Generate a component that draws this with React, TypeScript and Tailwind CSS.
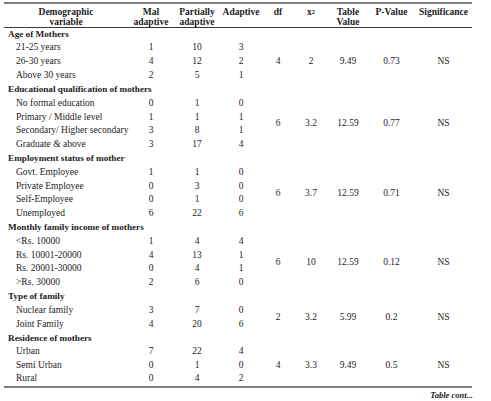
type Group = {
  title: string;
  rows: [string, string, string, string][];
  stats: [string, string, string, string, string];
};

const groups: Group[] = [
  {
    title: "Age of Mothers",
    rows: [
      ["21-25 years", "1", "10", "3"],
      ["26-30 years", "4", "12", "2"],
      ["Above 30 years", "2", "5", "1"],
    ],
    stats: ["4", "2", "9.49", "0.73", "NS"],
  },
  {
    title: "Educational qualification of mothers",
    rows: [
      ["No formal education", "0", "1", "0"],
      ["Primary / Middle level", "1", "1", "1"],
      ["Secondary/ Higher secondary", "3", "8", "1"],
      ["Graduate & above", "3", "17", "4"],
    ],
    stats: ["6", "3.2", "12.59", "0.77", "NS"],
  },
  {
    title: "Employment status of mother",
    rows: [
      ["Govt. Employee", "1", "1", "0"],
      ["Private Employee", "0", "3", "0"],
      ["Self-Employee", "0", "1", "0"],
      ["Unemployed", "6", "22", "6"],
    ],
    stats: ["6", "3.7", "12.59", "0.71", "NS"],
  },
  {
    title: "Monthly family income of mothers",
    rows: [
      ["<Rs. 10000", "1", "4", "4"],
      ["Rs. 10001-20000", "4", "13", "1"],
      ["Rs. 20001-30000", "0", "4", "1"],
      [">Rs. 30000", "2", "6", "0"],
    ],
    stats: ["6", "10", "12.59", "0.12", "NS"],
  },
  {
    title: "Type of family",
    rows: [
      ["Nuclear family", "3", "7", "0"],
      ["Joint Family", "4", "20", "6"],
    ],
    stats: ["2", "3.2", "5.99", "0.2", "NS"],
  },
  {
    title: "Residence of mothers",
    rows: [
      ["Urban", "7", "22", "4"],
      ["Semi Urban", "0", "1", "0"],
      ["Rural", "0", "4", "2"],
    ],
    stats: ["4", "3.3", "9.49", "0.5", "NS"],
  },
];

export default function App() {
  return (
    <div className="w-[491px] h-[401px] bg-white pt-[2px] pl-[4px] text-[#1c1c1c] font-['Liberation_Serif',serif]">
      <table className="w-[468px] table-fixed border-collapse text-[9.5px]">
        <colgroup>
          <col className="w-[124px]" />
          <col className="w-[46px]" />
          <col className="w-[46px]" />
          <col className="w-[42px]" />
          <col className="w-[32px]" />
          <col className="w-[34px]" />
          <col className="w-[40px]" />
          <col className="w-[47px]" />
          <col className="w-[57px]" />
        </colgroup>
        <thead>
          <tr className="h-[22px] border-t-2 border-t-[#808080] border-b border-b-[#3a3a3a] text-center align-top leading-[10px]">
            <th className="pt-[3px] font-bold">
              Demographic
              <br />
              variable
            </th>
            <th className="pt-[3px] font-bold">
              Mal
              <br />
              adaptive
            </th>
            <th className="pt-[3px] font-bold">
              Partially
              <br />
              adaptive
            </th>
            <th className="pt-[3px] font-bold">Adaptive</th>
            <th className="pt-[3px] font-bold">df</th>
            <th className="pt-[3px] font-bold">
              x<sup className="text-[6.5px] relative -top-[1px]">2</sup>
            </th>
            <th className="pt-[3px] font-bold">
              Table
              <br />
              Value
            </th>
            <th className="pt-[3px] font-bold">P-Value</th>
            <th className="pt-[3px] font-bold">Significance</th>
          </tr>
        </thead>
        <tbody className="border-b-2 border-b-[#808080]">
          {groups.map((g) => [
            <tr key={g.title} className="h-[13.82px]">
              <td colSpan={9} className="pl-[4px] text-[9.2px] font-bold whitespace-nowrap leading-none">
                {g.title}
              </td>
            </tr>,
            ...g.rows.map((r, i) => (
              <tr key={g.title + r[0]} className="h-[13.82px] leading-none">
                <td className="pl-[12px] whitespace-nowrap">{r[0]}</td>
                <td className="text-center">{r[1]}</td>
                <td className="text-center">{r[2]}</td>
                <td className="text-center">{r[3]}</td>
                {i === 0 &&
                  g.stats.map((s, j) => (
                    <td key={j} rowSpan={g.rows.length} className="text-center align-middle">
                      {s}
                    </td>
                  ))}
              </tr>
            )),
          ])}
        </tbody>
      </table>
      <div className="w-[469px] pt-[2px] text-right text-[8.5px] font-bold italic leading-[11px]">
        Table cont...
      </div>
    </div>
  );
}
